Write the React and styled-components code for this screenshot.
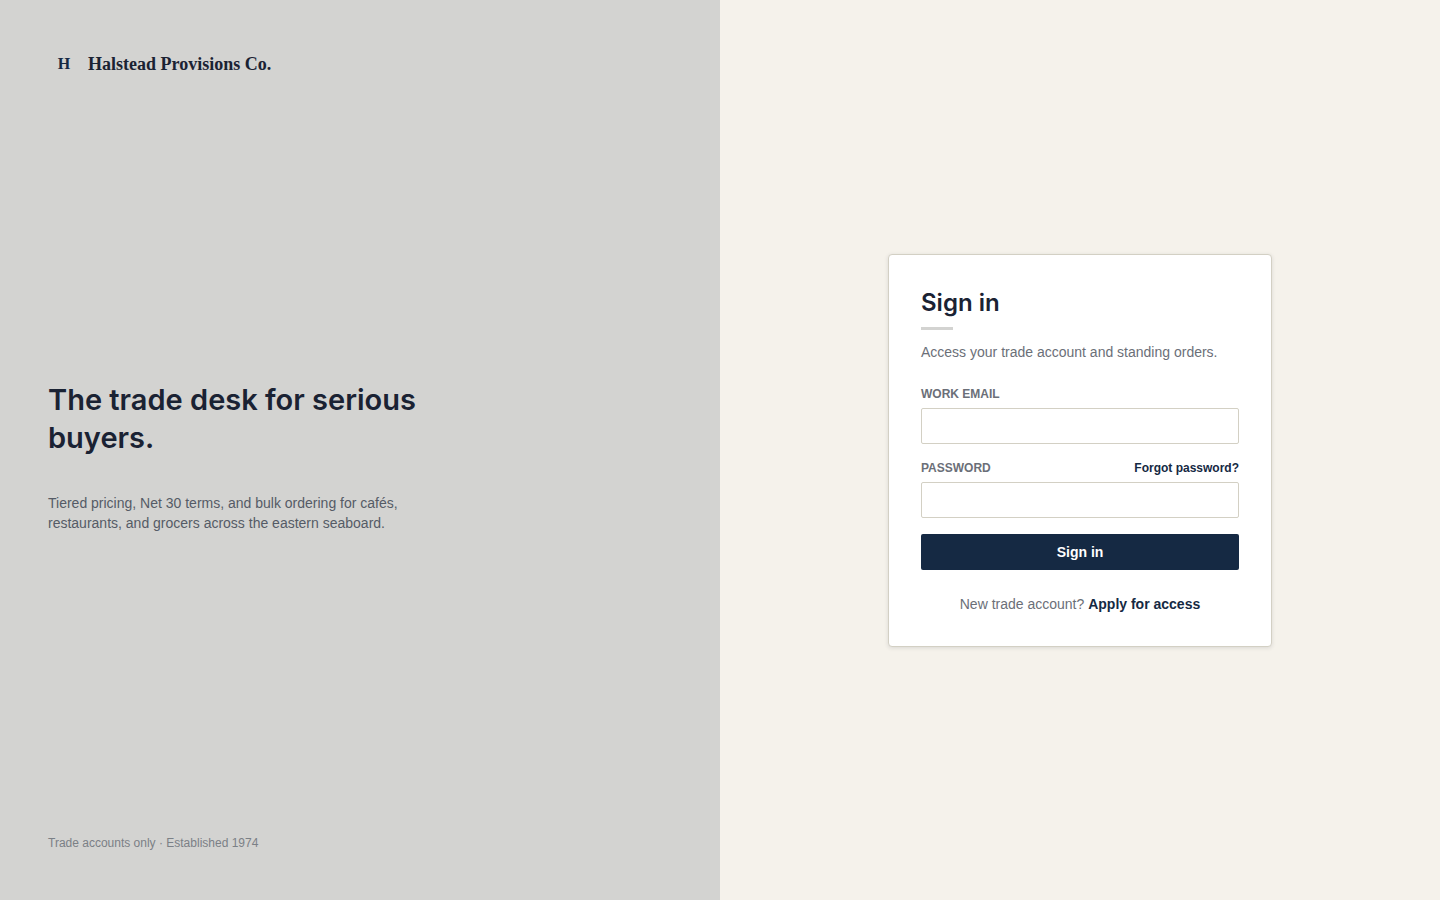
import React, { useState } from "react";
import styled, { createGlobalStyle } from "styled-components";

const GlobalStyle = createGlobalStyle`
  * {
    box-sizing: border-box;
  }

  body {
    margin: 0;
    background: #f5f2eb;
    color: #1a2233;
    font-family: "Liberation Sans", Arial, sans-serif;
    font-size: 14px;
    line-height: 20px;
  }
`;

const Page = styled.div`
  display: grid;
  grid-template-columns: 1fr 1fr;
  min-height: 100vh;
`;

const BrandPanel = styled.section`
  display: flex;
  flex-direction: column;
  justify-content: space-between;
  padding: 48px;
  background: #d3d3d1;
`;

const Brand = styled.div`
  display: flex;
  align-items: center;
  gap: 8px;
  font-family: "Liberation Serif", "Times New Roman", serif;
  font-size: 18px;
  font-weight: 700;
`;

const BrandMark = styled.span`
  width: 32px;
  line-height: 32px;
  text-align: center;
  font-size: 16px;
  color: #152943;
`;

const Headline = styled.h1`
  max-width: 448px;
  margin: 0 0 36px;
  font-family: Inter, sans-serif;
  font-size: 29px;
  font-weight: 600;
  line-height: 38px;
`;

const Lead = styled.p`
  max-width: 384px;
  margin: 0;
  color: #555b66;
`;

const Footnote = styled.p`
  margin: 0;
  font-size: 12px;
  line-height: 18px;
  color: #7b8086;
`;

const FormPanel = styled.main`
  display: flex;
  align-items: center;
  justify-content: center;
  padding: 48px;
`;

const Card = styled.form`
  display: flex;
  flex-direction: column;
  gap: 16px;
  width: 100%;
  max-width: 384px;
  padding: 32px;
  background: #ffffff;
  border: 1px solid #d3d0c4;
  border-radius: 4px;
  box-shadow: 0 1px 4px rgba(26, 34, 51, 0.12);
`;

const CardHeader = styled.header`
  margin-bottom: 8px;
`;

const Title = styled.h2`
  margin: 0;
  font-family: Inter, sans-serif;
  font-size: 24px;
  font-weight: 600;
  line-height: 32px;

  &::after {
    content: "";
    display: block;
    width: 32px;
    height: 3px;
    margin: 8px 0 12px;
    background: #d3d3d1;
  }
`;

const Muted = styled.p`
  margin: 0;
  color: #6b6f78;
  text-align: ${(props) => props.$align || "left"};
`;

const Field = styled.div`
  display: flex;
  flex-direction: column;
  gap: 6px;
`;

const FieldTop = styled.div`
  display: flex;
  justify-content: space-between;
  font-size: 12px;
  line-height: 16px;
`;

const Label = styled.label`
  color: #6b6f78;
  font-weight: 700;
  text-transform: uppercase;
`;

const Input = styled.input`
  width: 100%;
  height: 36px;
  padding: 0 12px;
  border: 1px solid #d3d0c4;
  border-radius: 2px;
  background: #ffffff;
  color: inherit;
  font: inherit;
`;

const TextLink = styled.a`
  color: #152943;
  font-weight: 700;
  text-decoration: none;

  &:hover {
    text-decoration: underline;
  }
`;

const Button = styled.button`
  height: 36px;
  border: 0;
  border-radius: 2px;
  background: #152943;
  color: #ffffff;
  font: inherit;
  font-weight: 700;
  cursor: pointer;
`;

const Signup = styled(Muted)`
  margin-top: 8px;
`;

const App = () => {
  const [email, setEmail] = useState("");
  const [password, setPassword] = useState("");

  const handleSubmit = (event) => {
    event.preventDefault();
  };

  return (
    <>
      <GlobalStyle />
      <Page>
        <BrandPanel>
          <Brand>
            <BrandMark>H</BrandMark>
            <span>Halstead Provisions Co.</span>
          </Brand>
          <div>
            <Headline>The trade desk for serious buyers.</Headline>
            <Lead>
              Tiered pricing, Net 30 terms, and bulk ordering for cafés,
              restaurants, and grocers across the eastern seaboard.
            </Lead>
          </div>
          <Footnote>Trade accounts only · Established 1974</Footnote>
        </BrandPanel>

        <FormPanel>
          <Card onSubmit={handleSubmit}>
            <CardHeader>
              <Title>Sign in</Title>
              <Muted>Access your trade account and standing orders.</Muted>
            </CardHeader>

            <Field>
              <FieldTop>
                <Label htmlFor="email">Work email</Label>
              </FieldTop>
              <Input
                id="email"
                type="email"
                value={email}
                onChange={(event) => setEmail(event.target.value)}
              />
            </Field>

            <Field>
              <FieldTop>
                <Label htmlFor="password">Password</Label>
                <TextLink href="#forgot">Forgot password?</TextLink>
              </FieldTop>
              <Input
                id="password"
                type="password"
                value={password}
                onChange={(event) => setPassword(event.target.value)}
              />
            </Field>

            <Button type="submit">Sign in</Button>

            <Signup $align="center">
              New trade account?{" "}
              <TextLink href="#apply">Apply for access</TextLink>
            </Signup>
          </Card>
        </FormPanel>
      </Page>
    </>
  );
};

export default App;
